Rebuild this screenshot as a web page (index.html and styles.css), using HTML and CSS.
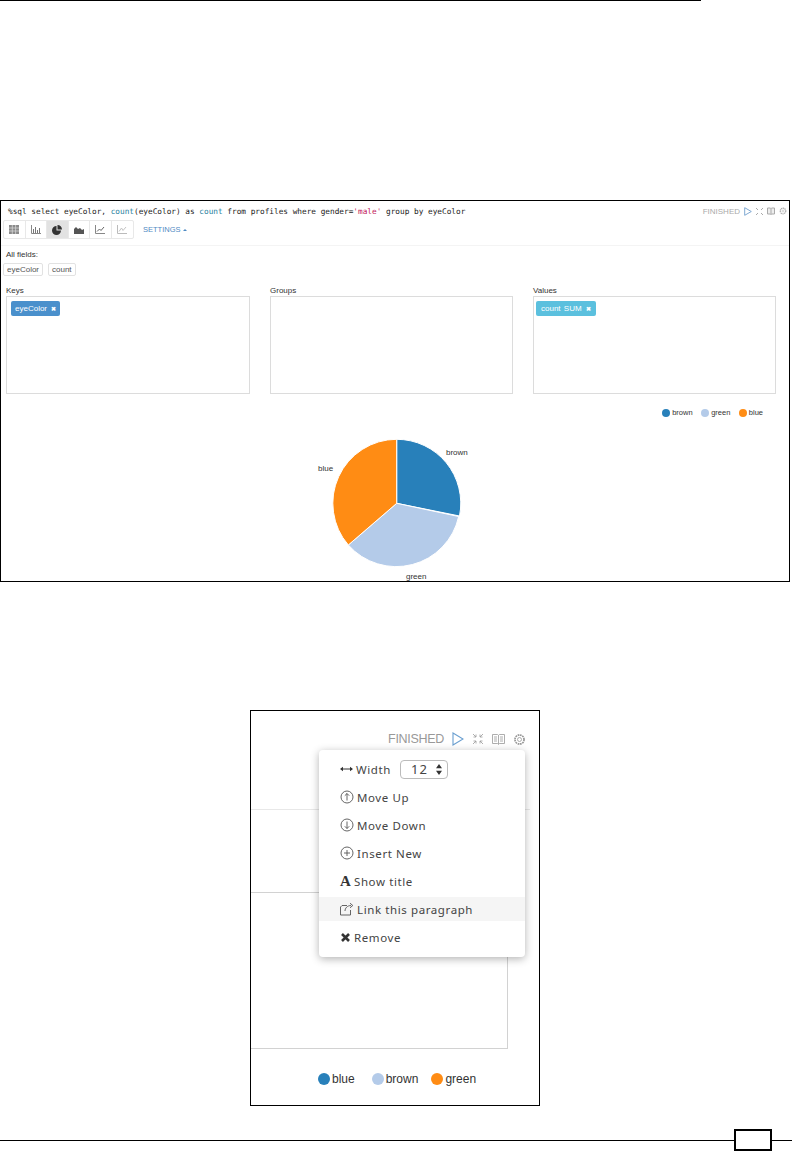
FILE: index.html
```html
<!DOCTYPE html>
<html lang="en">
<head>
  <meta charset="UTF-8" />
  <title>Zeppelin pie chart settings</title>
  <link rel="stylesheet" href="styles.css">
</head>
<body>

<div class="top-rule"></div>

<div class="shot shot-wide">
  <div class="para-head">
    <div class="code-row">
      <code class="code">%sql select eyeColor, <span class="fn">count</span>(eyeColor) as <span class="fn">count</span> from profiles where gender=<span class="str">'male'</span> group by eyeColor</code>
      <div class="status">
        <span class="finished">FINISHED</span>
        <svg width="8" height="9" viewBox="0 0 8 9"><path d="M.7.7 7.3 4.500.7 8.300Z" fill="none" stroke="#7fa9d2"/></svg>
        <svg width="7" height="7" viewBox="0 0 7 7"><path d="M0 0 2 2M7 0 5 2M0 7 2 5M7 7 5 5" stroke="#aaa" fill="none"/></svg>
        <svg width="8" height="8" viewBox="0 0 8 8"><path d="M.5 1h3l.5.5.5-.5h3v6h-3L4 7.500 3.500 7h-3ZM4 1.500v6" stroke="#aaa" fill="#eee"/></svg>
        <svg width="8" height="8" viewBox="0 0 8 8"><circle cx="4" cy="4" r="2.800" fill="none" stroke="#aaa" stroke-width="1.200" stroke-dasharray="1.300 .5"/><circle cx="4" cy="4" r="1" fill="none" stroke="#bbb" stroke-width=".6"/></svg>
      </div>
    </div>
    <div class="toolbar-row">
      <div class="btn-group">
        <div class="chart-btn"><svg width="10" height="9" viewBox="0 0 10 9"><path d="M0 0h10v9H0Z" fill="#8a8a8a"/><path d="M0 3h10M0 6h10M3.300 0v9M6.600 0v9" stroke="#ddd" stroke-width=".7"/></svg></div>
        <div class="chart-btn"><svg width="10" height="9" viewBox="0 0 10 9"><path d="M.5 0v8.500H10" fill="none" stroke="#888"/><path d="M2 4h1v4H2ZM4 2h1v6H4ZM6 5h1v3H6ZM8 3h1v5H8Z" fill="#777"/></svg></div>
        <div class="chart-btn active"><svg width="10" height="10" viewBox="0 0 10 10"><path d="M4.500 1v4.500H9A4.500 4.500 0 1 1 4.500 1ZM5.500 0A4.500 4.500 0 0 1 10 4.500H5.500Z" fill="#333"/></svg></div>
        <div class="chart-btn"><svg width="10" height="8" viewBox="0 0 10 8"><path d="M0 8V3l2-2 2 2 2-1 2 2 2-1v5Z" fill="#555"/></svg></div>
        <div class="chart-btn"><svg width="10" height="9" viewBox="0 0 10 9"><path d="M.5 0v8.500H10" fill="none" stroke="#888"/><path d="M2 6.500 4.500 4l1.500 1.500L9 2" fill="none" stroke="#666"/></svg></div>
        <div class="chart-btn"><svg width="10" height="9" viewBox="0 0 10 9"><path d="M.5 0v8.500H10" fill="none" stroke="#bbb"/><path d="M2 6.500 4.500 3l1.500 2.500L9 2" fill="none" stroke="#c4c4c4"/></svg></div>
      </div>
      <span class="settings">SETTINGS <span class="caret"></span></span>
    </div>
  </div>

  <div class="fields-title">All fields:</div>
  <div class="chips">
    <span class="chip">eyeColor</span>
    <span class="chip">count</span>
  </div>

  <div class="pivot">
    <div class="pivot-col">
      <div class="pivot-label">Keys</div>
      <div class="pivot-box"><span class="tag tag-key">eyeColor <b>&#10006;</b></span></div>
    </div>
    <div class="pivot-col">
      <div class="pivot-label">Groups</div>
      <div class="pivot-box"></div>
    </div>
    <div class="pivot-col">
      <div class="pivot-label">Values</div>
      <div class="pivot-box"><span class="tag tag-value">count SUM <b>&#10006;</b></span></div>
    </div>
  </div>

  <div class="legend-small">
    <span class="legend-item"><i class="dot dot-blue"></i>brown</span>
    <span class="legend-item"><i class="dot dot-light"></i>green</span>
    <span class="legend-item"><i class="dot dot-orange"></i>blue</span>
  </div>

  <svg class="pie" width="788" height="148" viewBox="1 433 788 148">
    <g stroke="#fff" stroke-width="1">
      <path d="M396.700 503.300V439.300A64 64 0 0 1 459.500 516Z" fill="#2880ba"/>
      <path d="M396.700 503.300 458.700 516.500A64 64 0 0 1 348.300 545Z" fill="#b4cbe9"/>
      <path d="M396.700 503.300 348.300 545A64 64 0 0 1 396.700 439.300Z" fill="#ff8c14"/>
    </g>
    <text x="446" y="455" class="pie-label">brown</text>
    <text x="318" y="471" class="pie-label">blue</text>
    <text x="406" y="579" class="pie-label">green</text>
  </svg>
</div>

<div class="shot shot-narrow">
  <div class="narrow-head">
    <div class="status status-big">
      <span class="finished">FINISHED</span>
      <svg width="12" height="14" viewBox="0 0 12 14"><path d="M1 1 11 7 1 13Z" fill="none" stroke="#6a9fd0" stroke-width="1.100"/></svg>
      <svg width="12" height="12" viewBox="0 0 12 12"><path d="M1 1 4 4M4 1.500V4H1.500M11 1 8 4M8 1.500V4h2.500M1 11 4 8M4 10.500V8H1.500M11 11 8 8M8 10.500V8h2.500" fill="none" stroke="#999" stroke-width=".8"/></svg>
      <svg width="13" height="12" viewBox="0 0 13 12"><path d="M.5 1.500h5l1 .8 1-.8h5v9h-5l-1 .8-1-.8h-5ZM6.500 2.300v9M2 4h3M2 6h3M2 8h3M8 4h3M8 6h3M8 8h3" fill="none" stroke="#999" stroke-width=".8"/></svg>
      <svg width="13" height="13" viewBox="0 0 13 13"><circle cx="6.500" cy="6.500" r="4.500" fill="none" stroke="#999" stroke-width="1.800" stroke-dasharray="1.700 .65"/><circle cx="6.500" cy="6.500" r="3.600" fill="#fff"/><circle cx="6.500" cy="6.500" r="2" fill="none" stroke="#999" stroke-width=".8"/></svg>
    </div>
  </div>
  <div class="narrow-spacer"></div>
  <div class="narrow-box"></div>
  <div class="legend-big">
    <span class="legend-item"><i class="dot dot-blue"></i>blue</span>
    <span class="legend-item"><i class="dot dot-light"></i>brown</span>
    <span class="legend-item"><i class="dot dot-orange"></i>green</span>
  </div>

  <div class="menu">
    <div class="menu-item">
      <svg width="13" height="12" viewBox="0 0 13 12"><path d="M1 6h11" stroke="#333"/><path d="M0 6l3-2.200v4.400ZM13 6l-3-2.200v4.400Z" fill="#333"/></svg>
      <span>Width</span>
      <span class="width-select">12
        <svg width="6" height="11" viewBox="0 0 6 11"><path d="M3 0 6 4.300H0ZM3 11 0 6.700h6Z" fill="#333"/></svg>
      </span>
    </div>
    <div class="menu-item">
      <svg width="14" height="14" viewBox="0 0 14 14"><circle cx="7" cy="7" r="6" fill="none" stroke="#555" stroke-width=".9"/><path d="M7 10.500v-7M4.800 5.700 7 3.500l2.200 2.200" fill="none" stroke="#555" stroke-width=".9"/></svg>
      <span>Move Up</span>
    </div>
    <div class="menu-item">
      <svg width="14" height="14" viewBox="0 0 14 14"><circle cx="7" cy="7" r="6" fill="none" stroke="#555" stroke-width=".9"/><path d="M7 3.500v7M4.800 8.300 7 10.500l2.200-2.200" fill="none" stroke="#555" stroke-width=".9"/></svg>
      <span>Move Down</span>
    </div>
    <div class="menu-item">
      <svg width="14" height="14" viewBox="0 0 14 14"><circle cx="7" cy="7" r="6" fill="none" stroke="#555" stroke-width=".9"/><path d="M7 4v6M4 7h6" fill="none" stroke="#555" stroke-width=".9"/></svg>
      <span>Insert New</span>
    </div>
    <div class="menu-item">
      <span class="title-glyph">A</span>
      <span>Show title</span>
    </div>
    <div class="menu-item hover">
      <svg width="14" height="14" viewBox="0 0 14 14"><path d="M7 3.500H2L.5 5v8h10V8" fill="none" stroke="#555" stroke-width=".9"/><path d="M5 9c0-3 2.500-5.500 6-5.500M10 1.200l2.800 2.300L10 5.800" fill="none" stroke="#555" stroke-width=".9"/></svg>
      <span>Link this paragraph</span>
    </div>
    <div class="menu-item">
      <svg width="11" height="11" viewBox="0 0 11 11"><path d="M2 2l7 7M9 2 2 9" stroke="#333" stroke-width="2.600"/></svg>
      <span>Remove</span>
    </div>
  </div>
</div>

<div class="page-foot">
  <div class="foot-line"></div>
  <div class="page-number"></div>
  <div class="foot-line foot-end"></div>
</div>

</body>
</html>
```

FILE: styles.css
```css
* {
  box-sizing: border-box;
}
body {
  margin: 0;
  background-color: white;
  color: #333;
  font-family: "Liberation Sans", Arial, sans-serif;
}
.top-rule {
  width: 701px;
  height: 1px;
  background-color: #000;
}
.shot {
  position: relative;
  border: 1px solid #000;
  background-color: white;
}
.shot-wide {
  width: 790px;
  height: 382px;
  margin-top: 199px;
}
.shot-narrow {
  width: 290px;
  height: 396px;
  margin-top: 128px;
  margin-left: 250px;
}

/* paragraph header */
.para-head {
  height: 45px;
  border-bottom: 1px solid #f4f4f4;
}
.code-row {
  display: flex;
  justify-content: space-between;
  align-items: center;
  height: 20px;
  padding: 0 2px 0 7px;
}
.code {
  font-family: "DejaVu Sans Mono", monospace;
  font-size: 7.75px;
  color: #222;
}
.fn {
  color: #2a7f9e;
}
.str {
  color: #c2185b;
}
.status {
  display: flex;
  align-items: center;
  gap: 4px;
  color: #aaa;
  font-size: 8px;
}
.status-big {
  gap: 8px;
  font-size: 12.5px;
  color: #999;
}
.status-big .finished {
  letter-spacing: -0.3px;
}
.toolbar-row {
  display: flex;
  align-items: center;
  margin-left: 2px;
  margin-top: -1px;
}
.btn-group {
  display: flex;
  border: 1px solid #e8e8e8;
  border-radius: 2px;
}
.chart-btn {
  display: flex;
  align-items: center;
  justify-content: center;
  width: 21.500px;
  height: 17px;
  border-right: 1px solid #e8e8e8;
}
.chart-btn:last-child {
  border-right: none;
}
.chart-btn.active {
  background-color: #e2e2e2;
}
.settings {
  margin-left: 9px;
  color: #4f8ac4;
  font-size: 7.5px;
}
.caret {
  display: inline-block;
  border: 2px solid transparent;
  border-top: none;
  border-bottom: 2px solid #4f8ac4;
  vertical-align: 1px;
}

/* fields and pivot boxes */
.fields-title {
  margin: 3px 0 0 5px;
  font-size: 8px;
  line-height: 11px;
  color: #333;
}
.chips {
  display: flex;
  gap: 5px;
  margin: 3px 0 0 2px;
}
.chip {
  height: 13px;
  padding: 0 3px;
  border: 1px solid #e2e2e2;
  border-radius: 2px;
  font-size: 8px;
  line-height: 11px;
  color: #555;
}
.pivot {
  display: grid;
  grid-template-columns: 244px 243px 243px;
  gap: 20px;
  margin: 9px 0 0 5px;
}
.pivot-label {
  font-size: 8px;
  line-height: 11px;
  color: #333;
}
.pivot-box {
  display: flex;
  align-items: flex-start;
  height: 98px;
  padding: 4px;
  border: 1px solid #dcdcdc;
}
.pivot-col:last-child .pivot-box {
  padding-left: 2px;
}
.tag {
  height: 15px;
  padding: 0 4px;
  border-radius: 2px;
  color: white;
  font-size: 8px;
  line-height: 15px;
  word-spacing: 1px;
}
.tag b {
  margin-left: 1px;
  font-size: 6px;
}
.tag-key {
  background-color: #4a90cc;
}
.tag-value {
  padding: 0 5px;
  background-color: #5bc0de;
}

/* legends */
.legend-item {
  display: flex;
  align-items: center;
}
.dot {
  display: block;
  border-radius: 50%;
}
.dot-blue {
  background-color: #2880ba;
}
.dot-light {
  background-color: #b4cbe9;
}
.dot-orange {
  background-color: #ff8c14;
}
.legend-small {
  display: flex;
  justify-content: flex-end;
  align-items: flex-start;
  gap: 8.500px;
  height: 39px;
  padding: 14px 26px 0 0;
  font-size: 7.5px;
  line-height: 10px;
}
.legend-small .dot {
  width: 8px;
  height: 8px;
  margin-right: 2px;
}
.pie {
  display: block;
}
.pie-label {
  font-family: "Liberation Sans", Arial, sans-serif;
  font-size: 8px;
  fill: #333;
}

/* second shot */
.narrow-head {
  height: 99px;
  margin-right: 9px;
  padding: 21px 4px 0 0;
  border-bottom: 1px solid #e8e8e8;
}
.narrow-head .status {
  justify-content: flex-end;
}
.narrow-spacer {
  height: 82px;
}
.narrow-box {
  width: 257px;
  height: 157px;
  border: 1px solid #d2d2d2;
  border-left: none;
}
.legend-big {
  display: flex;
  gap: 13px;
  margin-top: 23px;
  padding-left: 67px;
  font-size: 12px;
  line-height: 14px;
  color: #333;
}
.legend-big .legend-item:first-child {
  margin-right: 4px;
}
.legend-big .dot {
  width: 12px;
  height: 12px;
  margin-right: 2px;
}

/* dropdown over the second shot */
.menu {
  position: absolute;
  top: 39px;
  left: 68px;
  width: 206px;
  height: 207px;
  padding-top: 7px;
  background-color: white;
  border-radius: 4px;
  box-shadow: 0 2px 8px rgba(0,0,0,0.3);
  font-family: "Noto Sans", sans-serif;
  font-size: 11.5px;
  letter-spacing: 0.6px;
  color: #444;
}
.menu-item {
  display: flex;
  align-items: center;
  gap: 3px;
  height: 24px;
  margin-bottom: 4px;
  padding-left: 21px;
}
.menu-item.hover {
  background-color: #f5f5f5;
}
.width-select {
  display: flex;
  align-items: center;
  justify-content: space-between;
  width: 48px;
  height: 19px;
  margin-left: 6px;
  padding: 0 5px 0 10px;
  border: 1px solid #bbb;
  border-radius: 4px;
  font-size: 13px;
  letter-spacing: 1px;
}
.title-glyph {
  width: 11px;
  font-family: "Liberation Serif", serif;
  font-size: 15px;
  font-weight: bold;
  color: #333;
}

/* page furniture */
.page-foot {
  display: flex;
  align-items: center;
  margin-top: 23px;
}
.foot-line {
  flex: 1;
  height: 1px;
  background-color: #000;
}
.foot-end {
  flex: none;
  width: 20px;
}
.page-number {
  width: 38px;
  height: 22px;
  border: 2px solid #000;
}
```
